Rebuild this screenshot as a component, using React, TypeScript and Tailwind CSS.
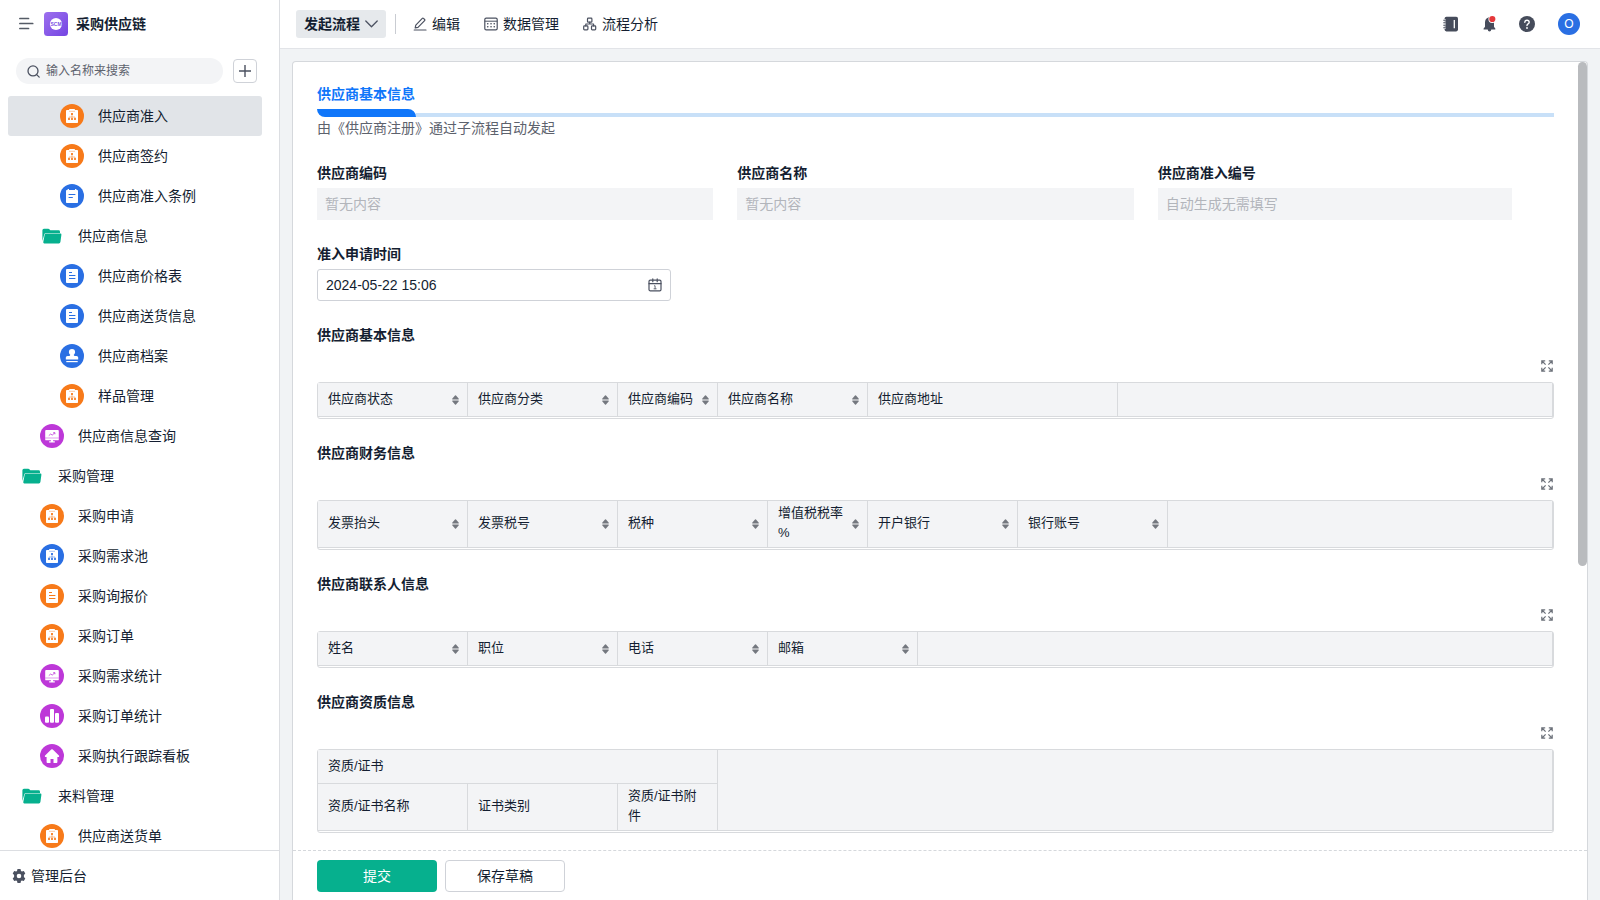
import { useState, type ReactNode } from "react";

type IconKind = "clip" | "note" | "doc" | "stamp" | "screen" | "bars" | "home" | "folder";
type Tone = "orange" | "blue" | "purple" | "green";

interface NavItem {
  label: string;
  level: 1 | 2 | 3;
  icon: IconKind;
  tone: Tone;
}

const NAV: NavItem[] = [
  { label: "供应商准入", level: 3, icon: "clip", tone: "orange" },
  { label: "供应商签约", level: 3, icon: "clip", tone: "orange" },
  { label: "供应商准入条例", level: 3, icon: "note", tone: "blue" },
  { label: "供应商信息", level: 2, icon: "folder", tone: "green" },
  { label: "供应商价格表", level: 3, icon: "doc", tone: "blue" },
  { label: "供应商送货信息", level: 3, icon: "doc", tone: "blue" },
  { label: "供应商档案", level: 3, icon: "stamp", tone: "blue" },
  { label: "样品管理", level: 3, icon: "clip", tone: "orange" },
  { label: "供应商信息查询", level: 2, icon: "screen", tone: "purple" },
  { label: "采购管理", level: 1, icon: "folder", tone: "green" },
  { label: "采购申请", level: 2, icon: "clip", tone: "orange" },
  { label: "采购需求池", level: 2, icon: "clip", tone: "blue" },
  { label: "采购询报价", level: 2, icon: "doc", tone: "orange" },
  { label: "采购订单", level: 2, icon: "clip", tone: "orange" },
  { label: "采购需求统计", level: 2, icon: "screen", tone: "purple" },
  { label: "采购订单统计", level: 2, icon: "bars", tone: "purple" },
  { label: "采购执行跟踪看板", level: 2, icon: "home", tone: "purple" },
  { label: "来料管理", level: 1, icon: "folder", tone: "green" },
  { label: "供应商送货单", level: 2, icon: "clip", tone: "orange" },
];

const TONES: Record<Tone, string> = {
  orange: "#f77a1a",
  blue: "#2a6fe3",
  purple: "#bd38d8",
  green: "#06b08e",
};

const INDENT = { 1: "pl-3", 2: "pl-8", 3: "pl-[52px]" } as const;

function NavIcon({ icon, tone }: { icon: IconKind; tone: Tone }) {
  const c = TONES[tone];
  if (icon === "folder") {
    return (
      <svg className="size-6 shrink-0" viewBox="0 0 24 24" aria-hidden="true">
        <path d="M2.4 6.2q0-1.5 1.5-1.5h4.3q.9 0 1.4.7l.7.9h8.3q1.4 0 1.4 1.4v1.2H6.2q-1.5 0-1.9 1.4L2.4 17z" fill={c} />
        <path d="M5.9 9.6h14.5q1.2 0 1 1.1l-1 7.4q-.2 1.3-1.5 1.3H4.3q-1.3 0-1-1.3l1.4-7.5q.2-1 1.2-1z" fill={c} />
      </svg>
    );
  }
  return (
    <svg className="size-6 shrink-0" viewBox="0 0 24 24" aria-hidden="true">
      <circle cx="12" cy="12" r="12" fill={c} />
      {icon === "clip" && (
        <>
          <rect x="6" y="6" width="12" height="13" rx=".8" fill="#fff" />
          <rect x="9" y="5" width="6" height="2" rx=".4" fill="#fff" />
          <path d="M9 7.300h6" fill="none" stroke={c} strokeWidth=".6" opacity=".7" />
          <rect x="11" y="9" width="2" height="2" fill={c} opacity=".9" />
          <path d="M12 11v3M9 14v-1h6v1" stroke={c} strokeWidth=".5" fill="none" />
          <path d="M8 14h2v2H8zM11 14h2v2h-2zM14 14h2v2h-2z" fill={c} opacity=".85" />
        </>
      )}
      {icon === "note" && (
        <>
          <rect x="6" y="6" width="12" height="13" rx=".8" fill="#fff" />
          <path d="M8.300 5v2.200M15.700 5v2.200" stroke="#fff" strokeWidth="1.400" />
          <path d="M8.600 10.500h6.800M8.600 13.500h4.200" stroke={c} strokeWidth="1" />
        </>
      )}
      {icon === "doc" && (
        <>
          <rect x="6" y="5" width="12" height="14" rx=".9" fill="#fff" />
          <path d="M9 8.500h3M9 11.500h6.400M9 14.500h6.400" stroke={c} strokeWidth="1" />
        </>
      )}
      {icon === "stamp" && (
        <>
          <circle cx="12" cy="8" r="3.100" fill="#fff" />
          <path d="M10.600 9h2.800q-.3 2.300 1.100 2.900h2q1.700 0 1.700 1.700v1.900H5.800v-1.900q0-1.700 1.700-1.700h2q1.400-.6 1.100-2.900z" fill="#fff" />
          <path d="M6.300 17.600h11.400" stroke="#fff" strokeWidth="1.200" />
        </>
      )}
      {icon === "screen" && (
        <>
          <rect x="5.200" y="6" width="13.600" height="10.300" rx=".9" fill="#fff" />
          <path d="M5.200 14h13.600" stroke={c} strokeWidth=".5" />
          <path d="M8.800 11.600l1.900-1.600 1.500 1.100 2.600-2.300M13.200 8.700h1.700v1.600" stroke={c} strokeWidth=".8" fill="none" />
          <path d="M10.900 16h2.200v1.300h1.700v1.100H9.200v-1.100h1.700z" fill="#fff" />
        </>
      )}
      {icon === "bars" && (
        <>
          <rect x="5" y="12.500" width="4" height="6.300" rx="1" fill="#fff" />
          <rect x="10" y="5" width="4" height="13.800" rx="1" fill="#fff" />
          <rect x="15" y="9" width="4" height="9.800" rx="1" fill="#fff" />
        </>
      )}
      {icon === "home" && (
        <path
          d="M11.200 5.600q.8-.7 1.600 0l6.100 5.800q.5.500.2 1-.3.500-1 .5h-.7v5.100q0 .9-.9.900h-3v-3.900h-3v3.900h-3q-.9 0-.9-.9v-5.100h-.7q-.7 0-1-.5-.3-.5.2-1z"
          fill="#fff"
        />
      )}
    </svg>
  );
}

function Sidebar() {
  const [active, setActive] = useState(0);
  return (
    <aside className="flex w-[280px] shrink-0 flex-col border-r border-[#dcdee2] bg-white">
      <div className="flex h-12 shrink-0 items-center pl-[19px]">
        <button type="button" aria-label="收起菜单" className="text-[#555b66]">
          <svg className="h-4 w-[15px]" viewBox="0 0 15 16" fill="none" stroke="currentColor" strokeWidth="1.700" strokeLinecap="round" aria-hidden="true">
            <path d="M.9 2.500h8.600M.9 7.500h12.800M.9 12.500h8.600" />
          </svg>
        </button>
        <svg className="ml-[10px] size-6" viewBox="0 0 24 24" aria-hidden="true">
          <defs>
            <linearGradient id="brand" x1="0" y1="0" x2="1" y2="1">
              <stop offset="0" stopColor="#9d70ee" />
              <stop offset="1" stopColor="#7445e2" />
            </linearGradient>
          </defs>
          <rect width="24" height="24" rx="3.500" fill="url(#brand)" />
          <circle cx="12" cy="12" r="6.100" fill="#fff" />
          <text x="12" y="13.900" textAnchor="middle" fontFamily="Liberation Sans, sans-serif" fontWeight="700" fontSize="5" fill="#7d50e4">
            SCM
          </text>
        </svg>
        <h1 className="ml-2 text-sm font-bold text-[#141e31]">采购供应链</h1>
      </div>

      <div className="flex h-12 shrink-0 items-center gap-[10px] pr-[22px] pb-[2px] pl-4">
        <label className="flex h-[26px] min-w-0 flex-1 items-center gap-[6px] rounded-full bg-[#f3f4f6] pl-[11px]">
          <svg className="size-[13px] shrink-0" viewBox="0 0 13 13" fill="none" stroke="#4b5160" strokeWidth="1.300" strokeLinecap="round" aria-hidden="true">
            <circle cx="6" cy="5.900" r="5" />
            <path d="M9.700 9.600l2.500 2.500" />
          </svg>
          <input type="text" aria-label="搜索" placeholder="输入名称来搜索" className="min-w-0 flex-1 bg-transparent text-xs text-[#141e31] outline-none placeholder:text-[#5d626d]" />
        </label>
        <button type="button" aria-label="新建" className="flex size-6 items-center justify-center rounded border border-[#cfd2d8] text-[#4b5160]">
          <svg className="size-[14px]" viewBox="0 0 14 14" stroke="currentColor" strokeWidth="1.400" aria-hidden="true">
            <path d="M7 1v12M1 7h12" />
          </svg>
        </button>
      </div>

      <nav className="min-h-0 flex-1 overflow-y-auto [scrollbar-width:none]">
        <ul className="pr-[17px] pl-2">
          {NAV.map((item, i) => (
            <li key={item.label}>
              <button
                type="button"
                onClick={() => setActive(i)}
                className={`flex h-10 w-full items-center gap-[14px] rounded-[3px] text-sm text-[#141e31] ${INDENT[item.level]} ${i === active ? "bg-[#e1e4e8]" : ""}`}
              >
                <NavIcon icon={item.icon} tone={item.tone} />
                <span>{item.label}</span>
              </button>
            </li>
          ))}
        </ul>
      </nav>

      <div className="flex h-[50px] shrink-0 items-center border-t border-[#dcdee2] pl-3">
        <a href="#admin" className="flex items-center gap-[5px] text-sm text-[#141e31]">
          <svg className="size-[14px]" viewBox="0 0 14 14" aria-hidden="true">
            <path
              fill="#4b5160"
              fillRule="evenodd"
              d="M5.500 0h3l.5 1.900.9.500 1.900-.5 1.500 2.600L11.900 5.900v2.200l1.400 1.400-1.500 2.600-1.900-.5-.9.500L8.500 14h-3L5 12.100l-.9-.5-1.900.5L.7 9.500l1.400-1.400V5.900L.7 4.500l1.500-2.600 1.900.5.900-.5zM7 4.700a2.300 2.300 0 1 0 0 4.600 2.300 2.300 0 0 0 0-4.600z"
            />
          </svg>
          管理后台
        </a>
      </div>
    </aside>
  );
}

function ToolLink({ icon, children }: { icon: ReactNode; children: ReactNode }) {
  return (
    <button type="button" className="flex items-center gap-[5px] text-sm text-[#141e31]">
      <svg className="size-[14px] text-[#4b5160]" viewBox="0 0 14 14" fill="none" stroke="currentColor" strokeWidth="1.200" strokeLinecap="round" strokeLinejoin="round" aria-hidden="true">
        {icon}
      </svg>
      {children}
    </button>
  );
}

function Topbar() {
  return (
    <header className="flex h-[49px] shrink-0 items-center justify-between border-b border-[#e2e4e8] bg-white pr-5 pl-4">
      <div className="flex items-center">
        <button type="button" className="flex h-7 items-center gap-[5px] rounded-[3px] bg-[#e6e9ec] px-2 text-sm font-bold text-[#141e31]">
          发起流程
          <svg className="h-[8px] w-[13px]" viewBox="0 0 13 8" fill="none" stroke="#4b5160" strokeWidth="1.300" strokeLinecap="round" strokeLinejoin="round" aria-hidden="true">
            <path d="M.8 1l5.700 5.700L12.200 1" />
          </svg>
        </button>
        <span className="mr-[17px] ml-[9px] h-5 w-px bg-[#c9ccd2]" />
        <div className="flex items-center gap-6">
          <ToolLink
            icon={
              <>
                <path d="M2.200 10.800l.6-2.700L9.300 1.400q.6-.6 1.200 0l1.100 1.100q.6.6 0 1.200L5 10.300z" />
                <path d="M1.200 13h11.800" />
              </>
            }
          >
            编辑
          </ToolLink>
          <ToolLink
            icon={
              <>
                <rect x=".8" y="1.200" width="12.400" height="11.600" rx="1.400" />
                <path d="M1 4.200h12" strokeWidth="1" />
                <path d="M3.700 6.800h.1M7 6.800h.1M10.200 6.800h.1M3.700 9.800h.1M7 9.800h.1M10.200 9.800h.1" strokeWidth="1.600" />
              </>
            }
          >
            数据管理
          </ToolLink>
          <ToolLink
            icon={
              <>
                <rect x="4.500" y="1.200" width="4.400" height="4" rx=".8" />
                <rect x=".7" y="8.900" width="4.200" height="4" rx=".8" />
                <rect x="8.500" y="8.900" width="4.200" height="4" rx=".8" />
                <path d="M6.700 5.200v1.800M2.800 8.900V7h7.800v1.900" />
              </>
            }
          >
            流程分析
          </ToolLink>
        </div>
      </div>

      <div className="flex items-center">
        <button type="button" aria-label="通讯录" className="mr-[23px]">
          <svg className="size-4" viewBox="0 0 16 16" aria-hidden="true">
            <rect x="1.600" y=".8" width="13.400" height="14.600" rx="1.800" fill="#464c5b" />
            <path d="M.4 4.300h2.400M.4 6.800h2.400M.4 9.300h2.400M.4 11.800h2.400" stroke="#fff" strokeWidth="2" />
            <path d="M.3 4.300h2.600M.3 6.800h2.600M.3 9.300h2.600M.3 11.800h2.600" stroke="#464c5b" strokeWidth="1.100" />
            <path d="M11.300 4v8.200" stroke="#fff" strokeWidth="1.300" />
          </svg>
        </button>
        <button type="button" aria-label="消息" className="mr-[21px]">
          <svg className="h-[18px] w-4" viewBox="0 0 16 18" aria-hidden="true">
            <path d="M6.400 2.600q.3-.9 1.100-.9T8.600 2.600Q12 3.700 12 7.500v4.300l1.400 1.900q.4.800-.5.800H9.300q-.2 1.900-1.800 1.900t-1.800-1.900H2q-.9 0-.5-.8L3 11.800V7.500q0-3.800 3.400-4.900z" fill="#464c5b" />
            <circle cx="10.300" cy="4" r="3.900" fill="#fff" />
            <circle cx="10.300" cy="4" r="3.100" fill="#e5383b" />
          </svg>
        </button>
        <button type="button" aria-label="帮助" className="mr-[23px]">
          <svg className="size-4" viewBox="0 0 16 16" aria-hidden="true">
            <circle cx="8" cy="8" r="8" fill="#464c5b" />
            <path d="M5.800 6.300q.1-2.100 2.200-2.100t2.200 2q0 1.100-1.100 1.700T8 9.500" fill="none" stroke="#fff" strokeWidth="1.400" strokeLinecap="round" />
            <circle cx="8" cy="12" r=".9" fill="#fff" />
          </svg>
        </button>
        <button type="button" aria-label="账户" className="flex size-[22px] items-center justify-center rounded-full bg-[#2a6fe3] text-xs text-white">
          O
        </button>
      </div>
    </header>
  );
}

function Field({ id, label, children }: { id: string; label: string; children: ReactNode }) {
  return (
    <div className="min-w-0">
      <label htmlFor={id} className="mb-[5px] block text-sm leading-5 font-bold text-[#141e31]">
        {label}
      </label>
      {children}
    </div>
  );
}

function EmptyInput({ id, placeholder }: { id: string; placeholder: string }) {
  return <input id={id} type="text" readOnly placeholder={placeholder} className="block h-8 w-full bg-[#f3f4f6] px-2 text-sm outline-none placeholder:text-[#b2b5bb]" />;
}

function SortMark() {
  return (
    <svg className="h-[10px] w-[7px] shrink-0" viewBox="0 0 7 10" fill="#74787f" aria-hidden="true">
      <path d="M3 .6q.5-.6 1 0L6.800 3.700q.3.600-.4.600H.6q-.7 0-.4-.6zM3 9.400q.5.600 1 0L6.800 6.300q.3-.6-.4-.6H.6q-.7 0-.4.6z" />
      <path d="M.4 4.300h6.200v1.400H.4z" opacity=".45" />
    </svg>
  );
}

interface Column {
  label: string;
  width: number;
  sortable?: boolean;
}

const TH = "border-r border-b border-[#d8dadd] p-0 text-left font-normal";

function HeadCell({ column }: { column: Column }) {
  return (
    <div className={`flex min-h-[33px] items-center justify-between pl-[10px] ${column.sortable ? "pr-2" : "pr-[10px]"}`}>
      <span className="pt-[2px] pb-1 [line-break:anywhere]">{column.label}</span>
      {column.sortable && (
        <button type="button" aria-label={`${column.label} 排序`}>
          <SortMark />
        </button>
      )}
    </div>
  );
}

function DataSection({ title, columns, group }: { title: string; columns: Column[]; group?: string }) {
  return (
    <section>
      <h3 className="text-sm leading-5 font-bold text-[#141e31]">{title}</h3>
      <div className="flex h-[37px] items-center justify-end pt-1 pr-px">
        <button type="button" aria-label="全屏">
          <svg className="size-3" viewBox="0 0 12 12" fill="none" stroke="#6b7079" strokeWidth="1.200" aria-hidden="true">
            <path d="M.8 4.200V.8h3.400M7.800.8h3.400v3.400M11.200 7.800v3.400H7.800M4.200 11.200H.8V7.800M1 1l3.600 3.600M11 1L7.400 4.600M11 11L7.400 7.400M1 11l3.600-3.600" />
          </svg>
        </button>
      </div>
      <div className="rounded-[3px] border border-[#d8dadd] pb-px">
        <table className="w-full table-fixed border-separate border-spacing-0 text-[13px] leading-5 text-[#141e31]">
          <colgroup>
            {columns.map((c) => (
              <col key={c.label} style={{ width: c.width }} />
            ))}
            <col />
          </colgroup>
          <thead className="bg-[#f3f4f6]">
            {group && (
              <tr>
                <th scope="colgroup" colSpan={columns.length} className={TH}>
                  <HeadCell column={{ label: group, width: 0 }} />
                </th>
                <td rowSpan={2} className={TH} />
              </tr>
            )}
            <tr>
              {columns.map((c) => (
                <th key={c.label} scope="col" className={TH}>
                  <HeadCell column={c} />
                </th>
              ))}
              {!group && <td className={TH} />}
            </tr>
          </thead>
        </table>
      </div>
    </section>
  );
}

function FormCard() {
  return (
    <div className="relative flex min-h-0 flex-1 flex-col rounded-t border border-b-0 border-[#d5d8dc] bg-white">
      <div className="relative min-h-0 flex-1 overflow-hidden">
        <div className="flex flex-col gap-6 pt-[22px] pr-[33px] pl-6">
          <div>
            <h2 className="text-sm leading-5 font-bold text-[#0f76fa]">供应商基本信息</h2>
            <div className="mt-[5px] flex h-2 items-end">
              <span className="h-2 w-[99px] rounded-tr-lg rounded-bl-lg bg-[#0f76fa]" />
              <span className="h-1 flex-1 bg-[#c8e0f8]" />
            </div>
            <p className="text-sm leading-[22px] text-[#5d626d]">由《供应商注册》通过子流程自动发起</p>
          </div>

          <div className="grid grid-cols-3 gap-6">
            <Field id="code" label="供应商编码">
              <EmptyInput id="code" placeholder="暂无内容" />
            </Field>
            <Field id="name" label="供应商名称">
              <EmptyInput id="name" placeholder="暂无内容" />
            </Field>
            <div className="pr-[42px]">
              <Field id="serial" label="供应商准入编号">
                <EmptyInput id="serial" placeholder="自动生成无需填写" />
              </Field>
            </div>
            <div className="pr-[42px]">
              <Field id="time" label="准入申请时间">
                <div className="flex h-8 items-center rounded-[3px] border border-[#cfd2d8] pr-2">
                  <input id="time" type="text" defaultValue="2024-05-22 15:06" className="min-w-0 flex-1 bg-transparent px-2 text-sm text-[#141e31] outline-none" />
                  <svg className="size-[14px]" viewBox="0 0 14 14" fill="none" stroke="#4b5160" strokeWidth="1.200" strokeLinecap="round" aria-hidden="true">
                    <rect x="1" y="2.200" width="12" height="10.600" rx="1.300" />
                    <path d="M1 5.700h12M4.800.9v2.800M9.200.9v2.800" />
                    <path d="M6.400 7.800h.7v3M6 10.800h2.200" strokeWidth=".8" />
                  </svg>
                </div>
              </Field>
            </div>
          </div>

          <DataSection
            title="供应商基本信息"
            columns={[
              { label: "供应商状态", width: 150, sortable: true },
              { label: "供应商分类", width: 150, sortable: true },
              { label: "供应商编码", width: 100, sortable: true },
              { label: "供应商名称", width: 150, sortable: true },
              { label: "供应商地址", width: 250 },
            ]}
          />
          <DataSection
            title="供应商财务信息"
            columns={[
              { label: "发票抬头", width: 150, sortable: true },
              { label: "发票税号", width: 150, sortable: true },
              { label: "税种", width: 150, sortable: true },
              { label: "增值税税率%", width: 100, sortable: true },
              { label: "开户银行", width: 150, sortable: true },
              { label: "银行账号", width: 150, sortable: true },
            ]}
          />
          <DataSection
            title="供应商联系人信息"
            columns={[
              { label: "姓名", width: 150, sortable: true },
              { label: "职位", width: 150, sortable: true },
              { label: "电话", width: 150, sortable: true },
              { label: "邮箱", width: 150, sortable: true },
            ]}
          />
          <DataSection
            title="供应商资质信息"
            group="资质/证书"
            columns={[
              { label: "资质/证书名称", width: 150 },
              { label: "证书类别", width: 150 },
              { label: "资质/证书附件", width: 100 },
            ]}
          />
        </div>
        <div className="absolute top-0 right-0 h-[64%] w-[9px] rounded-full bg-[#b9bbbe]" />
      </div>

      <footer className="flex h-[50px] shrink-0 items-center gap-2 border-t border-dashed border-[#d5d8dc] pl-6">
        <button type="button" className="h-8 w-[120px] rounded bg-[#06b08e] text-sm text-white">
          提交
        </button>
        <button type="button" className="h-8 w-[120px] rounded border border-[#cfd2d8] bg-white text-sm text-[#141e31]">
          保存草稿
        </button>
      </footer>
    </div>
  );
}

export default function App() {
  return (
    <div className="flex h-screen bg-[#f1f3f5] font-['Liberation_Sans','Noto_Sans_CJK_SC',sans-serif]">
      <Sidebar />
      <div className="flex min-w-0 flex-1 flex-col">
        <Topbar />
        <main className="flex min-h-0 flex-1 flex-col px-3 pt-3">
          <FormCard />
        </main>
      </div>
    </div>
  );
}
